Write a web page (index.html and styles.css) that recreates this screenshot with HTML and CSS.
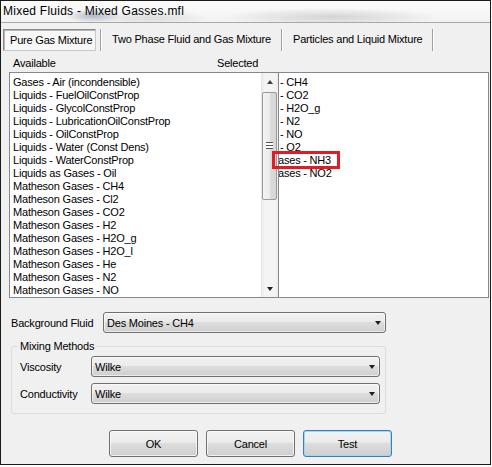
FILE: index.html
```html
<!DOCTYPE html>
<html>
<head>
<meta charset="utf-8">
<title>Mixed Fluids</title>
<link rel="stylesheet" href="styles.css">
</head>
<body>
<div class="window">
  <div class="titlebar"><span class="title">Mixed Fluids - Mixed Gasses.mfl</span></div>
  <div class="client">
    <div class="tabs">
      <div class="tab active">Pure Gas Mixture</div>
      <div class="sep"></div>
      <div class="tab t2">Two Phase Fluid and Gas Mixture</div>
      <div class="sep"></div>
      <div class="tab t3">Particles and Liquid Mixture</div>
      <div class="sep"></div>
    </div>
    <div class="labels">
      <span class="lab-avail">Available</span>
      <span class="lab-sel">Selected</span>
    </div>
    <div class="lists">
      <div class="list left">
        <div class="items">
          <div class="item">Gases - Air (incondensible)</div>
          <div class="item">Liquids - FuelOilConstProp</div>
          <div class="item">Liquids - GlycolConstProp</div>
          <div class="item">Liquids - LubricationOilConstProp</div>
          <div class="item">Liquids - OilConstProp</div>
          <div class="item">Liquids - Water (Const Dens)</div>
          <div class="item">Liquids - WaterConstProp</div>
          <div class="item">Liquids as Gases - Oil</div>
          <div class="item">Matheson Gases - CH4</div>
          <div class="item">Matheson Gases - Cl2</div>
          <div class="item">Matheson Gases - CO2</div>
          <div class="item">Matheson Gases - H2</div>
          <div class="item">Matheson Gases - H2O_g</div>
          <div class="item">Matheson Gases - H2O_l</div>
          <div class="item">Matheson Gases - He</div>
          <div class="item">Matheson Gases - N2</div>
          <div class="item">Matheson Gases - NO</div>
        </div>
        <div class="vscroll">
          <div class="sbtn"><span class="tri up"></span></div>
          <div class="track">
            <div class="thumb"><span class="grip"></span></div>
          </div>
          <div class="sbtn"><span class="tri down"></span></div>
        </div>
      </div>
      <div class="list right">
        <div class="items">
          <div class="item">- CH4</div>
          <div class="item">- CO2</div>
          <div class="item">- H2O_g</div>
          <div class="item">- N2</div>
          <div class="item">- NO</div>
          <div class="item">- O2</div>
          <div class="item wide">ases - NH3</div>
          <div class="item wide">ases - NO2</div>
        </div>
        <div class="highlight"></div>
      </div>
    </div>
    <div class="bgrow">
      <span class="bglabel">Background Fluid</span>
      <div class="combo wide-combo"><span class="ctext">Des Moines - CH4</span><span class="tri down"></span></div>
    </div>
    <div class="group">
      <span class="legend">Mixing Methods</span>
      <div class="grow">
        <span class="glabel">Viscosity</span>
        <div class="combo g-combo"><span class="ctext">Wilke</span><span class="tri down"></span></div>
      </div>
      <div class="grow">
        <span class="glabel">Conductivity</span>
        <div class="combo g-combo"><span class="ctext">Wilke</span><span class="tri down"></span></div>
      </div>
    </div>
    <div class="buttons">
      <div class="btn">OK</div>
      <div class="btn">Cancel</div>
      <div class="btn focus">Test</div>
    </div>
  </div>
</div>
</body>
</html>
```
FILE: styles.css
```css
html, body {
  margin: 0;
  padding: 0;
  background: #ffffff;
}
body {
  font-family: "Liberation Sans", Arial, sans-serif;
  font-size: 11px;
  letter-spacing: -0.2px;
  color: #000;
}
.window {
  box-sizing: border-box;
  width: 491px;
  height: 465px;
  border: 1px solid #1a1a1a;
  display: flex;
  flex-direction: column;
  background: #f0f0f0;
}
.titlebar {
  height: 21px;
  border-bottom: 1px solid #a8a8a8;
  background:
    radial-gradient(ellipse 28px 7px at 92px 15px, rgba(120,135,160,0.55), rgba(120,135,160,0) ),
    radial-gradient(ellipse 60px 8px at 150px 17px, rgba(150,150,150,0.25), rgba(150,150,150,0)),
    radial-gradient(ellipse 110px 9px at 330px 16px, rgba(150,150,150,0.35), rgba(150,150,150,0)),
    linear-gradient(#fbfbfb, #f3f3f3);
}
.title {
  display: block;
  padding: 2px 0 0 2px;
  font-size: 12px;
  line-height: 16px;
  letter-spacing: 0.25px;
}
.client {
  flex: 1;
  display: flex;
  flex-direction: column;
}
.tabs {
  display: flex;
  margin-top: 6px;
  padding-left: 2px;
  height: 22px;
}
.tab {
  box-sizing: border-box;
  height: 22px;
  line-height: 21px;
  white-space: nowrap;
}
.tab.active {
  width: 93px;
  padding-left: 6px;
  border: 1px solid #8a8a8a;
  border-right-color: #c8c8c8;
  border-bottom-color: #c8c8c8;
  background: #f7f7f7;
  box-shadow: inset 1px 1px 0 #b5b5b5;
  margin-right: 4px;
}
.tab.t2 {
  width: 179px;
  padding-left: 10px;
}
.tab.t3 {
  width: 149px;
  padding-left: 10px;
}
.sep {
  width: 1px;
  height: 22px;
  border-left: 1px solid #a0a0a0;
  background: #ffffff;
}
.labels {
  display: flex;
  margin-top: 5px;
  height: 14px;
  line-height: 14px;
  padding-left: 12px;
}
.lab-avail {
  width: 204px;
}
.lists {
  display: flex;
  margin-top: 2px;
  margin-left: 8px;
  height: 226px;
}
.list {
  box-sizing: border-box;
  height: 226px;
  background: #fff;
  border: 1px solid #828790;
  position: relative;
}
.list.left {
  width: 270px;
  display: flex;
}
.list.right {
  width: 210px;
  border-left: none;
}
.items {
  flex: 1;
  padding-top: 3px;
  overflow: hidden;
}
.list.left .items {
  padding-left: 3px;
}
.list.right .items {
  padding-left: 1px;
}
.item {
  height: 13px;
  line-height: 13px;
  white-space: nowrap;
}
.item.wide {
  margin-left: -2px;
  background: #fff;
  position: relative;
}
.vscroll {
  width: 17px;
  display: flex;
  flex-direction: column;
  background: linear-gradient(90deg, #e4e4e4, #f4f4f4 20%, #f4f4f4 80%, #ececec);
}
.sbtn {
  height: 17px;
  display: flex;
  align-items: center;
  justify-content: center;
}
.track {
  flex: 1;
  padding-top: 2px;
}
.thumb {
  box-sizing: border-box;
  margin-left: 1px;
  width: 15px;
  height: 108px;
  border: 1px solid #9a9a9a;
  border-radius: 2px;
  background: linear-gradient(90deg, #f4f4f4, #ebebeb 50%, #dcdcdc 50%, #d6d6d6);
  display: flex;
  align-items: center;
  justify-content: center;
}
.grip {
  width: 7px;
  box-sizing: border-box;
  height: 7px;
  margin-top: -2px;
  border-top: 1px solid #555;
  border-bottom: 1px solid #555;
  background: linear-gradient(#fff 0, #fff 2px, #555 2px, #555 3px, #fff 3px);
}
.tri {
  width: 0;
  height: 0;
  border-left: 3.5px solid transparent;
  border-right: 3.5px solid transparent;
}
.tri.up {
  border-bottom: 4px solid #404040;
}
.tri.down {
  border-top: 4px solid #202020;
}
.highlight {
  position: absolute;
  left: -7px;
  top: 78px;
  width: 68px;
  height: 18px;
  box-sizing: border-box;
  border: 3px solid #e31b23;
}
.bgrow {
  display: flex;
  margin-top: 14px;
  margin-left: 10px;
  height: 21px;
  align-items: center;
}
.bglabel {
  width: 92px;
}
.combo {
  box-sizing: border-box;
  height: 21px;
  border: 1px solid #707070;
  border-radius: 3px;
  background: linear-gradient(#f2f2f2, #ebebeb 45%, #dddddd 50%, #cfcfcf);
  box-shadow: inset 0 0 0 1px rgba(255,255,255,0.6);
  display: flex;
  align-items: center;
  padding-left: 3px;
  padding-right: 4px;
}
.ctext {
  flex: 1;
}
.wide-combo {
  width: 283px;
}
.group {
  position: relative;
  box-sizing: border-box;
  margin-top: 13px;
  margin-left: 10px;
  width: 375px;
  border: 1px solid #d5dfe5;
  border-radius: 3px;
  padding: 9px 5px 9px 8px;
  display: flex;
  flex-direction: column;
  gap: 6px;
}
.legend {
  position: absolute;
  left: 6px;
  top: -8px;
  padding: 0 2px 0 2px;
  line-height: 14px;
  background: #f0f0f0;
}
.grow {
  display: flex;
  align-items: center;
  height: 21px;
}
.glabel {
  width: 71px;
}
.g-combo {
  width: 289px;
}
.buttons {
  display: flex;
  gap: 8px;
  margin-top: 16px;
  margin-left: 108px;
}
.btn {
  box-sizing: border-box;
  width: 89px;
  height: 27px;
  border: 1px solid #707070;
  border-radius: 3px;
  background: linear-gradient(#f2f2f2, #ebebeb 45%, #dddddd 50%, #cfcfcf);
  box-shadow: inset 0 0 0 1px rgba(255,255,255,0.7);
  display: flex;
  align-items: center;
  justify-content: center;
}
.btn.focus {
  border-color: #3c7fb1;
  box-shadow: inset 0 0 0 1px #9fd7f5;
}
```
